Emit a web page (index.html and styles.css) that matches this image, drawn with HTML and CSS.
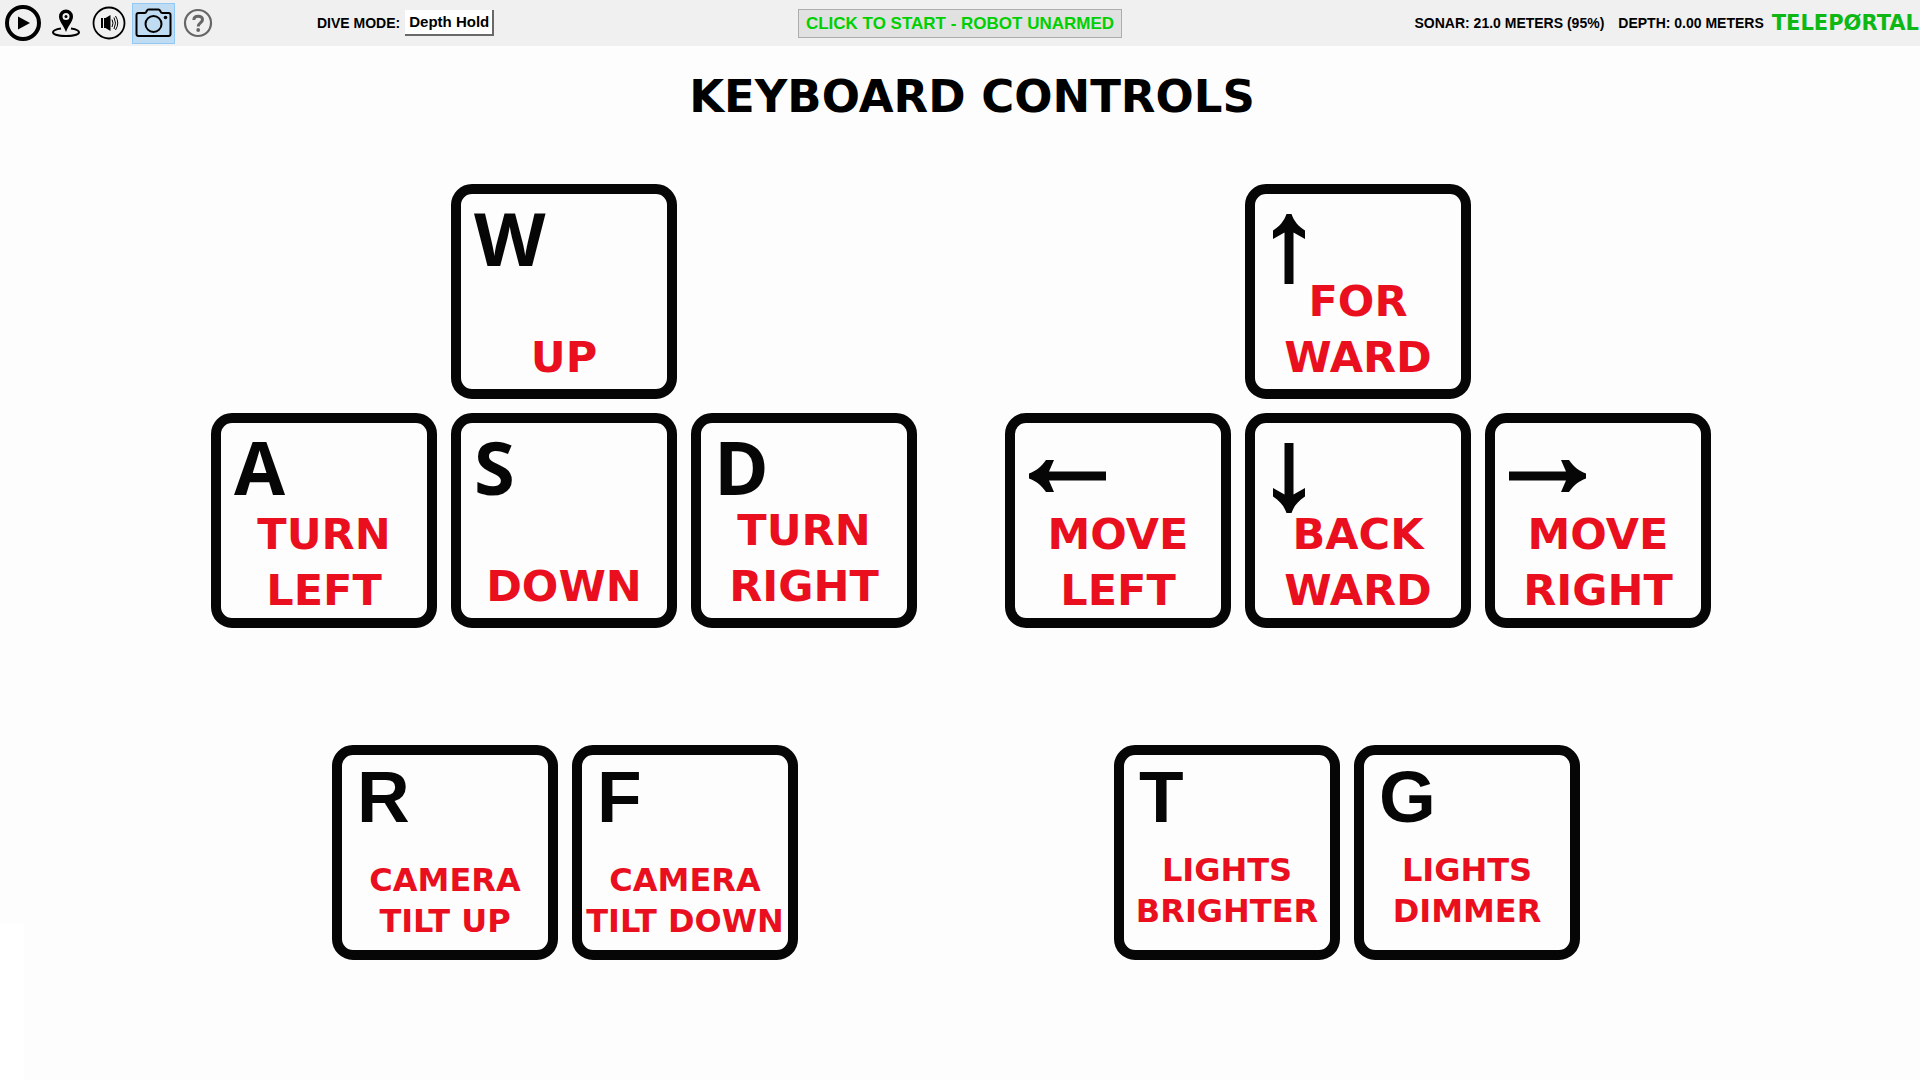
FILE: index.html
```html
<!DOCTYPE html>
<html lang="en">
<head>
<meta charset="utf-8">
<meta name="viewport" content="width=device-width, initial-scale=1">
<title>TELEPØRTAL</title>
<link rel="stylesheet" href="styles.css">
</head>
<body>
<header class="toolbar">
  <div class="toolbar-left">
    <div class="tools">
      <button class="tool" type="button" aria-label="Play">
        <svg width="38" height="38" viewBox="0 0 38 38"><circle cx="19" cy="19" r="16" fill="none" stroke="#000" stroke-width="4"/><path d="M14 12.500L26 19L14 25.500Z" fill="#000"/></svg>
      </button>
      <button class="tool" type="button" aria-label="Map">
        <svg width="30" height="30" viewBox="0 0 30 30"><path d="M10 20.500C5 21.300 2 22.700 2 24.300C2 26.700 8 28 15 28S28 26.700 28 24.300C28 22.700 25 21.300 20 20.500" fill="none" stroke="#000" stroke-width="2"/><path fill-rule="evenodd" d="M15 1.500A7 7 0 0 0 8 8.500C8 13 12 16.500 15 24C18 16.500 22 13 22 8.500A7 7 0 0 0 15 1.500ZM15 5A3.500 3.500 0 1 1 15 12A3.500 3.500 0 1 1 15 5Z" fill="#000"/><circle cx="15" cy="8.500" r="1.500"/></svg>
      </button>
      <button class="tool" type="button" aria-label="Sound">
        <svg width="34" height="34" viewBox="0 0 34 34"><circle cx="17" cy="17" r="15.500" fill="none" stroke="#000" stroke-width="1.800"/><path d="M9 12H11V22H9ZM12 12H13.500L18.500 9V25L13.500 22H12Z"/><path d="M20 13.500Q22 17 20 21M22 11.500Q25 17 22 23M23.500 10Q28 17 23.500 24" fill="none" stroke="#000"/></svg>
      </button>
      <button class="tool tool-active" type="button" aria-label="Camera" aria-pressed="true">
        <svg width="37" height="30" viewBox="0 0 37 30" fill="none" stroke="#000" stroke-width="2"><path d="M3.500 5H9.500Q11 5 11.500 3.500L12 2.500Q12.400 1.500 13.500 1.500H23.500Q24.500 1.500 25 2.500L25.500 3.500Q26 5 27.500 5H33.500Q35.500 5 35.500 7V26Q35.500 28 33.500 28H3.500Q1.500 28 1.500 26V7Q1.500 5 3.500 5Z"/><circle cx="18.500" cy="16" r="8"/><circle cx="30.500" cy="9.500" r="1.800" fill="#000" stroke="none"/></svg>
      </button>
      <button class="tool" type="button" aria-label="Help">
        <svg width="30" height="30" viewBox="0 0 30 30" fill="none" stroke="#666"><circle cx="15" cy="15" r="13" stroke-width="2.200"/><path d="M10.800 12C11 7 19.500 7.200 19.500 11.500C19.500 15 15.200 14.800 15.200 18.500" stroke-width="3"/><circle cx="15.200" cy="22" r="1.900" fill="#666" stroke="none"/></svg>
      </button>
    </div>
    <div class="mode">
      <label for="dive-mode">DIVE MODE:</label>
      <select id="dive-mode" class="mode-select"><option>Depth Hold</option></select>
    </div>
  </div>
  <button class="arm" type="button">CLICK TO START - ROBOT UNARMED</button>
  <div class="status">
    <span>SONAR: 21.0 METERS (95%)</span>
    <span>DEPTH: 0.00 METERS</span>
    <span class="brand">TELEPØRTAL</span>
  </div>
</header>

<main class="help">
  <h1 class="title">KEYBOARD CONTROLS</h1>

  <div class="clusters">
    <section class="cluster">
      <div class="keys">
        <div class="key key-top"><kbd>W</kbd><p>UP</p></div>
      </div>
      <div class="keys">
        <div class="key"><kbd>A</kbd><p>TURN<br>LEFT</p></div>
        <div class="key key-raised"><kbd>S</kbd><p>DOWN</p></div>
        <div class="key key-raised"><kbd>D</kbd><p>TURN<br>RIGHT</p></div>
      </div>
    </section>
    <section class="cluster">
      <div class="keys">
        <div class="key key-top">
          <svg class="arrow arrow-vertical" width="32" height="70" viewBox="0 0 32 70"><path d="M13.500 0H18.500C21 7 25 12 32 16.500V25L20.500 18.500V70H11.500V18.500L0 25V16.500C7 12 11 7 13.500 0Z"/></svg>
          <p>FOR<br>WARD</p>
        </div>
      </div>
      <div class="keys">
        <div class="key">
          <svg class="arrow arrow-horizontal" width="77" height="32" viewBox="0 0 77 32"><path d="M0 13.500V18.500C7 21 12 25 17 32H25L20 20.500H77V11.500H20L25 0H17C12 7 7 11 0 13.500Z"/></svg>
          <p>MOVE<br>LEFT</p>
        </div>
        <div class="key">
          <svg class="arrow arrow-vertical" width="32" height="70" viewBox="0 0 32 70"><path d="M13.500 70H18.500C21 63 25 58 32 53.500V45L20.500 51.500V0H11.500V51.500L0 45V53.500C7 58 11 63 13.500 70Z"/></svg>
          <p>BACK<br>WARD</p>
        </div>
        <div class="key">
          <svg class="arrow arrow-horizontal" width="77" height="32" viewBox="0 0 77 32"><path d="M77 13.500V18.500C70 21 65 25 60 32H52L57 20.500H0V11.500H57L52 0H60C65 7 70 11 77 13.500Z"/></svg>
          <p>MOVE<br>RIGHT</p>
        </div>
      </div>
    </section>
  </div>

  <div class="extras">
    <section class="keys">
      <div class="key key-small"><kbd>R</kbd><p>CAMERA<br>TILT UP</p></div>
      <div class="key key-small"><kbd>F</kbd><p>CAMERA<br>TILT DOWN</p></div>
    </section>
    <section class="keys">
      <div class="key key-small key-lights"><kbd>T</kbd><p>LIGHTS<br>BRIGHTER</p></div>
      <div class="key key-small key-lights"><kbd>G</kbd><p>LIGHTS<br>DIMMER</p></div>
    </section>
  </div>
</main>
</body>
</html>
```
FILE: styles.css
```css
* {
  box-sizing: border-box;
}

body {
  display: flex;
  flex-direction: column;
  min-height: 100vh;
  margin: 0;
  background: #fdfdfd;
  color: #000;
  font: bold 14px/20px "Liberation Sans", Arial, sans-serif;
}

/* Toolbar */
.toolbar {
  display: grid;
  grid-template-columns: 1fr auto 1fr;
  align-items: center;
  min-height: 46px;
  background: #f0f0f0;
  white-space: nowrap;
}

.toolbar-left,
.tools,
.mode,
.status {
  display: flex;
  align-items: center;
}

.toolbar-left {
  gap: 99px;
}

.tools {
  gap: 3px;
  padding-left: 3px;
}

.tool {
  display: flex;
  align-items: center;
  justify-content: center;
  min-width: 40px;
  height: 41px;
  padding: 0;
  border: 0;
  background: none;
}

.tool-active {
  width: 43px;
  border: 1px solid #90c8f6;
  background: #c0dcf3;
}

.mode {
  gap: 5px;
}

.mode-select {
  height: 26px;
  padding: 0 3px 0 4px;
  border: solid #696969;
  border-width: 0 2px 2px 0;
  border-radius: 0;
  appearance: none;
  background: #fff;
  color: #000;
  font: bold 15px/24px "Liberation Sans", Arial, sans-serif;
}

.arm {
  min-width: 324px;
  height: 29px;
  padding: 0 2px;
  border: 1px solid #adadad;
  background: #e1e1e1;
  color: #00d000;
  font: bold 17px/27px "Liberation Sans", Arial, sans-serif;
}

.status {
  justify-content: flex-end;
  gap: 14px;
  padding-right: 1px;
}

.brand {
  margin-left: -6px;
  color: #0db814;
  font: bold 21px/24px "DejaVu Sans", sans-serif;
}

/* Keyboard help */
.help {
  flex: 1;
  padding: 24px 16px;
  background: linear-gradient(#fefffe, #fefffe) no-repeat left bottom / 24px 156px;
}

.title {
  margin: 0 0 61px;
  padding: 1px 0 0 24px;
  font: bold 45px/52px "DejaVu Sans", sans-serif;
  text-align: center;
}

.clusters,
.extras {
  display: flex;
  flex-wrap: wrap;
  justify-content: center;
}

.clusters {
  gap: 88px;
  padding-left: 2px;
}

.extras {
  gap: 316px;
  margin-top: 117px;
  padding-right: 8px;
}

.cluster {
  display: flex;
  flex-direction: column;
  align-items: center;
  gap: 14px;
}

.keys {
  display: flex;
  gap: 14px;
}

.key {
  display: grid;
  width: 226px;
  min-height: 215px;
  border: 10px solid #060606;
  border-radius: 21px;
  color: #060606;
}

.key > * {
  grid-area: 1 / 1;
}

.key kbd {
  align-self: start;
  padding: 6px 0 0 13px;
  font: bold 74px/76px "Open Sans", sans-serif;
}

.key p {
  align-self: end;
  margin: 0;
  color: #ea0f1e;
  font: bold 43px/56px "DejaVu Sans", sans-serif;
  text-align: center;
  white-space: nowrap;
}

.key-top,
.key-raised {
  padding-bottom: 4px;
}

.key-small {
  padding-bottom: 8px;
}

.key-lights {
  padding-bottom: 18px;
}

.key-small kbd {
  padding: 6px 0 0 15px;
  font: bold 73px/72px "Liberation Sans", Arial, sans-serif;
}

.key-small p {
  font-size: 32px;
  line-height: 41px;
}

.arrow {
  fill: #060606;
}

.arrow-vertical {
  margin: 20px 0 0 18px;
}

.arrow-horizontal {
  margin: 37px 0 0 14px;
}
```
